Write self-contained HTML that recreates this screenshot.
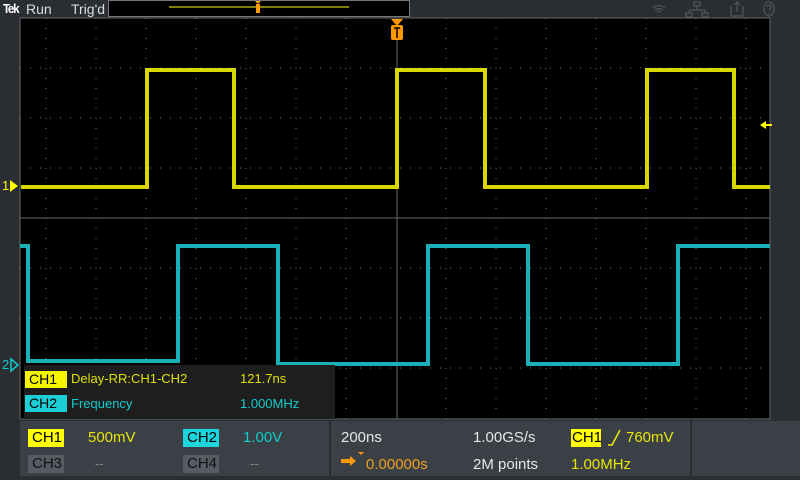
<!DOCTYPE html>
<html><head><style>
body{margin:0;width:800px;height:480px;background:#2a2d31;overflow:hidden;font-family:"Liberation Sans",sans-serif;position:relative}
.a{position:absolute;white-space:nowrap}
.t{font-size:14px;color:#e6e6e6}
.b{position:absolute;font-size:14px;line-height:17px;padding:0 4px}
</style></head><body>
<div class="a" style="left:3px;top:1px;font-size:13px;font-weight:bold;color:#fff;letter-spacing:-1.5px;transform:scaleX(0.9);transform-origin:left">Tek</div>
<div class="a" style="left:26px;top:1px;font-size:14px;color:#ddd">Run</div>
<div class="a" style="left:71px;top:1px;font-size:14px;color:#ddd">Trig'd</div>
<div class="a" style="left:108px;top:0;width:300px;height:15px;background:#000;border:1px solid #777"></div>
<svg class="a" style="left:0;top:0" width="800" height="480">
 <line x1="169" y1="7" x2="349" y2="7" stroke="#ff0" stroke-width="1"/>
 <path d="M255 1h6l-3 3z M256 4h4v9h-4z" fill="#f90"/>
 <g stroke="#555" fill="none" stroke-width="1.2">
  <path d="M653 8a9 9 0 0 1 12 0M655 10a6 6 0 0 1 8 0M657 12a3 3 0 0 1 4 0"/>
  <path d="M694 2h6v4h-6zM697 6v4M689 10h16M689 10v3M705 10v3M686 13h6v4h-6zM702 13h6v4h-6z"/>
  <path d="M731 6v10h12v-10M737 12v-10M734 5l3-3 3 3"/>
  <ellipse cx="769" cy="9" rx="5" ry="7"/><path d="M767 7a2 2 0 1 1 3 2v2M769 13v1"/>
 </g>
 <rect x="20" y="18" width="750" height="401" fill="#000" stroke="#666"/>
 <g stroke="#777" stroke-dasharray="1 9" stroke-width="1">
  <path d="M46 18V419M96 18V419M146 18V419M196 18V419M246 18V419M296 18V419M346 18V419M446 18V419M496 18V419M546 18V419M596 18V419M646 18V419M696 18V419M746 18V419"/>
  <path d="M20 68H770M20 118H770M20 168H770M20 268H770M20 318H770M20 368H770"/>
 </g>
 <path d="M20 218H770M397 18V419" stroke="#666" stroke-width="1"/>
 <path d="M391 19h12l-6 7z" fill="#f90"/>
 <rect x="391" y="25" width="12" height="15" rx="2" fill="#f90"/>
 <path d="M394 28h6M397 28v10" stroke="#000" stroke-width="1.5"/>
 <path d="M21 187H147V70H234V187H397V70H485V187H647V70H734V187H770" fill="none" stroke="#d8d800" stroke-width="4"/>
 <path d="M20 246H28V361H178V246H278V364H428V246H528V364H678V246H770" fill="none" stroke="#1ab0b8" stroke-width="4"/>
 <path d="M10 180l8 6-8 6z" fill="#ff0"/>
 <path d="M11 359l7 6-7 6z" fill="none" stroke="#1cc" stroke-width="1.5"/>
 <path d="M760 125l6-4v8z M766 124h6v2h-6z" fill="#ff0"/>
</svg>
<div class="a" style="left:2px;top:178px;color:#ff0;font-size:13px">1</div>
<div class="a" style="left:2px;top:357px;color:#1cc;font-size:13px">2</div>
<div class="a" style="left:24px;top:365px;width:311px;height:54px;background:#1e1e1e"></div>
<div class="b" style="left:25px;top:371px;width:34px;background:#f5f500;color:#000">CH1</div>
<div class="a" style="left:71px;top:371px;font-size:13px;color:#e0e000">Delay-RR:CH1-CH2</div>
<div class="a" style="left:240px;top:371px;font-size:13px;color:#e0e000">121.7ns</div>
<div class="b" style="left:25px;top:395px;width:34px;background:#1ccfd6;color:#000">CH2</div>
<div class="a" style="left:71px;top:396px;font-size:13px;color:#1cc">Frequency</div>
<div class="a" style="left:240px;top:396px;font-size:13px;color:#1cc">1.000MHz</div>
<div class="a" style="left:20px;top:421px;width:309px;height:55px;background:#3a4046"></div>
<div class="a" style="left:331px;top:421px;width:359px;height:55px;background:#3a4046"></div>
<div class="a" style="left:692px;top:421px;width:108px;height:55px;background:#3a4046"></div>
<div class="b" style="left:28px;top:429px;width:28px;background:#ff0;color:#000;font-size:15px;line-height:18px">CH1</div>
<div class="a" style="left:88px;top:429px;font-size:15px;color:#e6e600">500mV</div>
<div class="b" style="left:183px;top:429px;width:28px;background:#1cd6dc;color:#000;font-size:15px;line-height:18px">CH2</div>
<div class="a" style="left:243px;top:429px;font-size:15px;color:#1cc">1.00V</div>
<div class="b" style="left:28px;top:455px;width:28px;background:#555c63;color:#111;font-size:15px;line-height:18px">CH3</div>
<div class="a" style="left:95px;top:456px;font-size:13px;color:#888">--</div>
<div class="b" style="left:183px;top:455px;width:28px;background:#555c63;color:#111;font-size:15px;line-height:18px">CH4</div>
<div class="a" style="left:250px;top:456px;font-size:13px;color:#888">--</div>
<div class="a t" style="left:341px;top:429px;font-size:15px">200ns</div>
<svg class="a" style="left:340px;top:452px" width="30" height="20"><path d="M1 7h9v-3l6 5-6 5v-3h-9z" fill="#f90"/><path d="M18 0h6l-3 3z" fill="#f90"/></svg>
<div class="a" style="left:366px;top:456px;font-size:15px;color:#f0a020">0.00000s</div>
<div class="a t" style="left:473px;top:429px;font-size:15px">1.00GS/s</div>
<div class="a t" style="left:473px;top:456px;font-size:15px">2M points</div>
<div class="b" style="left:571px;top:429px;width:28px;background:#ff0;color:#000;font-size:15px;line-height:18px;padding:0 1px">CH1</div>
<svg class="a" style="left:606px;top:428px" width="16" height="20"><path d="M2 17h4l8-15" fill="none" stroke="#ee0" stroke-width="1.5"/></svg>
<div class="a" style="left:626px;top:429px;font-size:15px;color:#e6e600">760mV</div>
<div class="a" style="left:571px;top:456px;font-size:15px;color:#e6e600">1.00MHz</div>
</body></html>
